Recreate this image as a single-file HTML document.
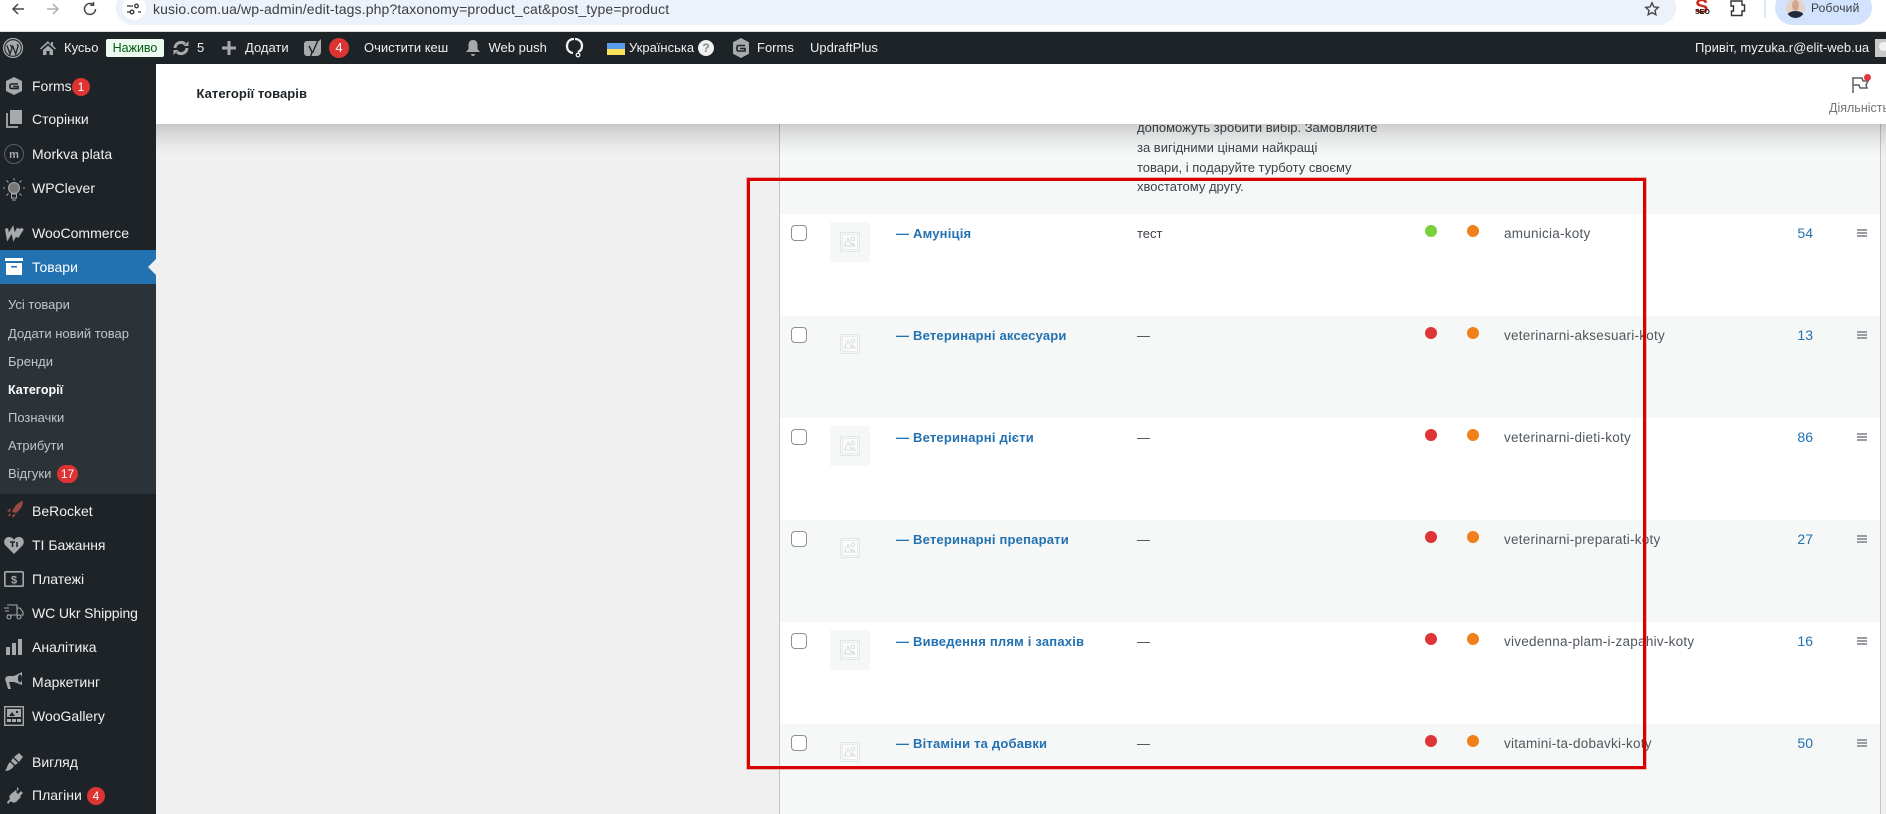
<!DOCTYPE html>
<html lang="uk"><head><meta charset="utf-8"><title>Категорії товарів</title>
<style>
*{box-sizing:border-box}
html,body{margin:0;padding:0;width:1886px;height:814px;overflow:hidden;background:#f0f0f1;font-family:"Liberation Sans",sans-serif;font-size:14px;color:#3c434a}
.a{position:absolute;white-space:nowrap}
svg{position:absolute;overflow:visible}
#chrome{position:absolute;left:0;top:0;width:1886px;height:32px;background:#fff;border-bottom:1px solid #dadce0;z-index:6;overflow:hidden}
#bar{position:absolute;left:0;top:32px;width:1886px;height:32px;background:#1d2327;z-index:6;overflow:hidden}
#bar .t{position:absolute;top:0;line-height:31px;font-size:13px;color:#f0f0f1;white-space:nowrap}
#side{position:absolute;left:0;top:64px;width:156px;height:750px;background:#1d2327;z-index:5;overflow:hidden}
.m{position:absolute;left:32px;line-height:20px;height:20px;font-size:14px;color:#f0f0f1;white-space:nowrap}
.s{position:absolute;left:8px;line-height:20px;height:20px;font-size:13px;color:#c3c4c7;white-space:nowrap}
.b{position:absolute;height:18px;border-radius:9px;background:#dd3333;color:#fff;font-size:12px;line-height:18px;text-align:center}
#hdr{position:absolute;left:156px;top:64px;width:1730px;height:60px;background:#fff;z-index:4;overflow:hidden}
#shad{position:absolute;left:156px;top:124px;width:1730px;height:32px;z-index:3;background:linear-gradient(to bottom,rgba(0,0,0,.17),rgba(0,0,0,.1) 30%,rgba(0,0,0,.03) 70%,rgba(0,0,0,0))}
#tbl{position:absolute;left:779px;top:124px;width:1102px;height:690px;background:#f6f7f7;border-left:1px solid #c3c4c7;border-right:1px solid #c3c4c7}
.r{position:absolute;left:780px;width:1100px;height:102px}
.w{background:#fff}.g{background:#f6f7f7}
.cb{position:absolute;left:11px;top:11px;width:16px;height:16px;border:1px solid #8c8f94;border-radius:4px;background:#fff}
.th{position:absolute;left:50px;top:8px;width:40px;height:40px;background:#f6f7f7}
.th svg{left:10px;top:10px}
.n{position:absolute;left:116px;top:10px;line-height:20px;font-weight:bold;font-size:13px;color:#2271b1;white-space:nowrap;letter-spacing:.2px}
.d{position:absolute;left:357px;top:10px;line-height:20px;font-size:13px;color:#3c434a;white-space:nowrap}
.o{position:absolute;top:11px;width:12px;height:12px;border-radius:50%}
.o1{left:645px}.o2{left:687px;background:#f0801a}
.sl{position:absolute;left:724px;top:10px;line-height:20px;font-size:13.500px;color:#50575e;white-space:nowrap;letter-spacing:.25px}
.c{position:absolute;right:67px;top:9px;line-height:20px;font-size:14px;color:#2271b1}
.h{position:absolute;left:1077px;top:15px;width:10px;height:8px;background:repeating-linear-gradient(to bottom,#9a9da1 0,#9a9da1 2px,transparent 2px,transparent 3px)}
.desc{position:absolute;left:1137px;font-size:13px;line-height:20px;color:#3c434a;white-space:nowrap}
#red{position:absolute;left:747px;top:178px;width:899px;height:591px;border:3px solid #d90000;box-shadow:0 0 0 .6px rgba(220,0,0,.45);z-index:2}
</style></head><body>

<svg width="0" height="0" style="left:0;top:0"><defs><symbol id="ph" viewBox="0 0 20 20"><rect x=".5" y=".5" width="19" height="19" fill="none" stroke="#e2e7e4"/><rect x="2.500" y="2.500" width="15" height="15" fill="#fafbfa" stroke="#e9ecea"/><path d="M4.500 14L8 6.500l3.500 6.500 1.500-1.500 2 2.500z" fill="none" stroke="#d9dfdb" stroke-width="1.100"/><circle cx="13" cy="7" r="1.700" fill="none" stroke="#d9dfdb"/></symbol></defs></svg>

<div id="chrome">
<svg style="left:10px;top:1px" width="16" height="16" viewBox="0 0 16 16" fill="none" stroke="#474747" stroke-width="1.5"><path d="M14 8H3M8 3L3 8l5 5"/></svg>
<svg style="left:45px;top:1px" width="16" height="16" viewBox="0 0 16 16" fill="none" stroke="#b0b0b0" stroke-width="1.5"><path d="M2 8h11M8 3l5 5-5 5"/></svg>
<svg style="left:82px;top:1px" width="16" height="16" viewBox="0 0 16 16" fill="none" stroke="#474747" stroke-width="1.5"><path d="M13.5 8A5.5 5.5 0 1 1 11.5 3.7"/><path d="M11.5 1v3.2h-3.2"/></svg>
<div class="a" style="left:116px;top:-10px;width:1560px;height:35px;background:#edf2fa;border-radius:18px"></div>
<div class="a" style="left:122px;top:-4px;width:24px;height:24px;background:#fff;border-radius:50%"></div>
<svg style="left:127px;top:3px" width="14" height="12" viewBox="0 0 14 12" fill="none" stroke="#333" stroke-width="1.3"><path d="M0 3h6M11 9h3M0 9h3"/><circle cx="9.5" cy="3" r="1.8"/><circle cx="5" cy="9" r="1.8"/></svg>
<div class="a" style="left:153px;top:0;line-height:18px;font-size:14px;color:#3c4043;letter-spacing:.13px">kusio.com.ua/wp-admin/edit-tags.php?taxonomy=product_cat&amp;post_type=product</div>
<svg style="left:1644px;top:1px" width="16" height="16" viewBox="0 0 16 16" fill="none" stroke="#474747" stroke-width="1.4"><path d="M8 1.8l1.9 4.1 4.4.5-3.3 3 .9 4.4L8 11.6l-3.9 2.2.9-4.4-3.3-3 4.4-.5z"/></svg>
<div class="a" style="left:1695px;top:-3px;line-height:20px;font-size:20px;font-weight:bold;color:#cc2a1a">S</div>
<div class="a" style="left:1695px;top:10px;line-height:6px;font-size:7px;font-weight:bold;color:#111">SEO</div>
<svg style="left:1730px;top:0" width="16" height="17" viewBox="0 0 16 17" fill="none" stroke="#333" stroke-width="1.4"><path d="M1 1h11v4h2.5v6H12v4.5H1.500V11h2V6h-2.500z"/></svg>
<div class="a" style="left:1764px;top:0;width:2px;height:18px;background:#dfe8f6"></div>
<div class="a" style="left:1775px;top:-10px;width:97px;height:35px;background:#d3e3fd;border-radius:18px"></div>
<div class="a" style="left:1786px;top:-1px;width:19px;height:19px;border-radius:50%;background:#e6d3c5;overflow:hidden"><div class="a" style="left:1px;top:12px;width:17px;height:10px;border-radius:50%;background:#1f2a3c"></div><div class="a" style="left:6px;top:1px;width:7px;height:11px;border-radius:50%;background:#cfa78d"></div></div>
<div class="a" style="left:1811px;top:0;line-height:17px;font-size:12px;color:#3c4043;letter-spacing:.2px">Робочий</div>
</div>

<div id="bar">
<svg style="left:3px;top:6px" width="20" height="20" viewBox="0 0 20 20"><circle cx="10" cy="10" r="9.500" fill="none" stroke="#a7aaad" stroke-width="1.300"/><circle cx="10" cy="10" r="7.800" fill="#a7aaad"/><path d="M4 7.500l3 8.500 2-6-1-2.500H7M9.500 7.500l3.200 8.500 2.300-7.500c.3-1-.5-2-1.200-2" fill="none" stroke="#1d2327" stroke-width="1.300"/></svg>
<svg style="left:40px;top:8px" width="16" height="16" viewBox="0 0 16 16"><path d="M8 1L0 8.500l1 1L8 3.300l7 6.200 1-1-3-2.700V2h-2v3zM3 10l5-4.500 5 4.500v5H9.500v-4h-3v4H3z" fill="#a7aaad"/></svg>
<div class="t" style="left:64px">Кусьо</div>
<div class="a" style="left:106px;top:7px;width:58px;height:18px;background:#edfaef;border-radius:2px;text-align:center;line-height:18px;font-size:12.500px;color:#005c12">Наживо</div>
<svg style="left:172px;top:7px" width="18" height="18" viewBox="0 0 18 18" fill="none" stroke="#a7aaad" stroke-width="3"><path d="M3 9a6 6 0 0 1 10-4M15 9a6 6 0 0 1-10 4"/><path d="M16.500 2v5h-5zM1.500 16v-5h5z" fill="#a7aaad" stroke="none"/></svg>
<div class="t" style="left:197px">5</div>
<svg style="left:222px;top:9px" width="14" height="14" viewBox="0 0 14 14"><path d="M5.500 0h3v5.500H14v3H8.500V14h-3V8.500H0v-3h5.500z" fill="#a7aaad"/></svg>
<div class="t" style="left:245px">Додати</div>
<svg style="left:304px;top:6px" width="18" height="20" viewBox="0 0 18 20"><path d="M3 3h12l2-2v13c0 2-2 4-4 4H3c-1.500 0-3-1.500-3-3V6c0-1.500 1.500-3 3-3z" fill="#a7aaad"/><path d="M5 8l3 6-1.500 5M14 2L8.500 15" fill="none" stroke="#1d2327" stroke-width="1.400"/></svg>
<div class="b" style="left:329px;top:6px;width:20px;height:20px;border-radius:10px;line-height:20px;font-size:13px">4</div>
<div class="t" style="left:364px">Очистити кеш</div>
<svg style="left:466px;top:7px" width="14" height="18" viewBox="0 0 14 18"><path d="M7 1c3 0 4.500 2 4.500 5v4l2.500 3H0l2.500-3V6C2.500 3 4 1 7 1zM5 15h4c0 1.200-1 2-2 2s-2-.8-2-2z" fill="#a7aaad"/></svg>
<div class="t" style="left:488.500px">Web push</div>
<svg style="left:565px;top:5px" width="19" height="22" viewBox="0 0 19 22" fill="none" stroke="#f0f0f1" stroke-width="2.300"><path d="M9 2C4 2 2 5.500 2 9s2 6.500 6 7M10 2c4 0 7 3 7 7 0 3-1.500 5-4 6"/><circle cx="13" cy="18" r="1.800" stroke-width="1.300"/></svg>
<div class="a" style="left:607px;top:11px;width:18px;height:6px;background:#5b9bef"></div>
<div class="a" style="left:607px;top:17px;width:18px;height:6px;background:#fbe05c"></div>
<div class="t" style="left:629px">Українська</div>
<div class="a" style="left:698px;top:8px;width:16px;height:16px;border-radius:50%;background:#f0f0f1;color:#8a8d90;font-size:12px;line-height:16px;text-align:center;font-weight:bold">?</div>
<svg style="left:733px;top:6px" width="16" height="20" viewBox="0 0 16 20"><path d="M8 0l8 4.200v11.600L8 20 0 15.800V4.200z" fill="#a7aaad"/><path d="M12 7.500H5.500c-1 0-1.500.5-1.500 1.500v2.500c0 1 .5 1.500 1.500 1.500H12v-2.500H7" fill="none" stroke="#1d2327" stroke-width="1.600"/></svg>
<div class="t" style="left:757px">Forms</div>
<div class="t" style="left:810px">UpdraftPlus</div>
<div class="t" style="left:1695px">Привіт, myzuka.r@elit-web.ua</div>
<div class="a" style="left:1875px;top:7px;width:11px;height:18px;background:#c9c9c9;overflow:hidden"><div class="a" style="left:4px;top:3px;width:9px;height:9px;border-radius:50%;background:#f1f1f1"></div></div>
</div>

<div id="hdr">
<div class="a" style="left:40.500px;top:20px;line-height:20px;font-size:13px;font-weight:bold;color:#1d2327;letter-spacing:.05px">Категорії товарів</div>
<svg style="left:1695px;top:12px" width="20" height="18" viewBox="0 0 20 18" fill="none" stroke="#5c6066" stroke-width="1.500"><path d="M2 1v16M2 2h9l1 3h5l-2 4 1 3H9l-1-3H2"/></svg>
<div class="a" style="left:1708px;top:10px;width:7px;height:7px;border-radius:50%;background:#e0383e"></div>
<div class="a" style="left:1673px;top:34px;line-height:20px;font-size:12.500px;color:#757575">Діяльність</div>
</div>
<div id="shad"></div>

<div id="side">
<svg style="left:6px;top:13px" width="16" height="18" viewBox="0 0 16 18"><path d="M8 0l8 4v10l-8 4-8-4V4z" fill="#a7aaad"/><path d="M12 7H5.500c-1 0-1.500.5-1.500 1.500v1.500c0 1 .5 1.500 1.500 1.500H12V9.500H7" fill="none" stroke="#1d2327" stroke-width="1.600"/></svg>
<div class="m" style="top:12px">Forms</div><div class="b" style="left:72px;top:14px;width:18px">1</div>
<svg style="left:6px;top:46px" width="16" height="18" viewBox="0 0 16 18"><path d="M4 0h12v14H4z" fill="#a7aaad"/><path d="M1 3v14h11" fill="none" stroke="#a7aaad" stroke-width="1.800"/></svg>
<div class="m" style="top:45px">Сторінки</div>
<svg style="left:4px;top:80px" width="20" height="20" viewBox="0 0 20 20"><circle cx="10" cy="10" r="9.500" fill="none" stroke="#5c6167"/><text x="10" y="14" font-family="Liberation Sans" font-size="11" font-weight="bold" fill="#a7aaad" text-anchor="middle">m</text></svg>
<div class="m" style="top:80px">Morkva plata</div>
<svg style="left:3px;top:113px" width="22" height="26" viewBox="0 0 22 26" fill="none" stroke="#a7aaad" stroke-width="1"><circle cx="11" cy="11" r="5.500" fill="#777"/><path d="M8.500 17h5v4h-5zM9 23h4M11 1v2.500M2 11H0M22 11h-2M3.500 3.500l2 2M18.500 3.500l-2 2M3.500 18.500l2-2M18.500 18.500l-2-2"/></svg>
<div class="m" style="top:114px">WPClever</div>
<svg style="left:4px;top:163px" width="20" height="12" viewBox="0 0 20 12" fill="none" stroke="#a7aaad" stroke-width="3.200"><path d="M2.500 1.500L4 10l4.500-7.500L10 10l4.500-8.500"/><path d="M14.500 1.500L13 10l5.500-8.500"/></svg>
<div class="m" style="top:159px">WooCommerce</div>
<div class="a" style="left:0;top:186px;width:156px;height:34px;background:#2271b1"></div>
<svg style="left:5px;top:194px" width="18" height="17" viewBox="0 0 18 17"><path d="M0 0h18v3H0zM1 5h16v12H1z" fill="#fff"/><path d="M6 8h6v1.500H6z" fill="#2271b1"/></svg>
<div class="m" style="top:193px;color:#fff">Товари</div>
<div class="a" style="left:148px;top:195px;width:0;height:0;border-top:8px solid transparent;border-bottom:8px solid transparent;border-right:8px solid #f0f0f1"></div>
<div class="a" style="left:0;top:220px;width:156px;height:210px;background:#2c3338"></div>
<div class="s" style="top:231px">Усі товари</div>
<div class="s" style="top:260px">Додати новий товар</div>
<div class="s" style="top:288px">Бренди</div>
<div class="s" style="top:316px;color:#fff;font-weight:bold;font-size:12.500px">Категорії</div>
<div class="s" style="top:344px">Позначки</div>
<div class="s" style="top:372px">Атрибути</div>
<div class="s" style="top:400px">Відгуки</div><div class="b" style="left:57px;top:401px;width:21px;height:18px">17</div>
<svg style="left:6px;top:437px" width="17" height="17" viewBox="0 0 17 17"><path d="M17 0c0 5-3 9-7 12l-4-1C8 6 12 1 17 0zM5 7L1 10l3 1zM10 13l-3 4-1-3zM4 12l-3 4 4-2z" fill="#9a4a40"/></svg>
<div class="m" style="top:437px">BeRocket</div>
<svg style="left:4px;top:472px" width="20" height="18" viewBox="0 0 20 18"><path d="M10 18L1 9C-1 5 1 1 5 1c2 0 4 1 5 3 1-2 3-3 5-3 4 0 6 4 4 8z" fill="#a7aaad"/><path d="M6 6h5M8.500 6v5M13 6v5" stroke="#1d2327" stroke-width="1.500"/></svg>
<div class="m" style="top:471px">ТІ Бажання</div>
<svg style="left:4px;top:507px" width="20" height="16" viewBox="0 0 20 16"><rect x=".8" y=".8" width="18.400" height="14.400" rx="1" fill="none" stroke="#a7aaad" stroke-width="1.600"/><text x="10" y="12.500" font-family="Liberation Sans" font-size="11" font-weight="bold" fill="#a7aaad" text-anchor="middle">$</text></svg>
<div class="m" style="top:505px">Платежі</div>
<svg style="left:4px;top:540px" width="20" height="16" viewBox="0 0 20 16" fill="none" stroke="#a7aaad" stroke-width="1.100"><path d="M3 1h10v10H3M13 4h3l3 4v3h-2M0 4h5M1 7h4"/><circle cx="5" cy="13" r="2"/><circle cx="15" cy="13" r="2"/></svg>
<div class="m" style="top:539px;letter-spacing:-.1px">WC Ukr Shipping</div>
<svg style="left:6px;top:575px" width="16" height="16" viewBox="0 0 16 16"><path d="M0 8h4v8H0zM6 4h4v12H6zM12 0h4v16h-4z" fill="#a7aaad"/></svg>
<div class="m" style="top:573px">Аналітика</div>
<svg style="left:5px;top:608px" width="18" height="18" viewBox="0 0 18 18"><path d="M17 0v13L9 10H4l2 7H3L1 10C0 8 0 6 1 5c.5-.5 2-1 3-1h5z" fill="#a7aaad"/><ellipse cx="15" cy="6.500" rx="2" ry="4" fill="#1d2327"/></svg>
<div class="m" style="top:608px">Маркетинг</div>
<svg style="left:4px;top:642px" width="20" height="20" viewBox="0 0 20 20"><rect x=".7" y=".7" width="18.600" height="18.600" fill="none" stroke="#a7aaad" stroke-width="1.400"/><path d="M3 3h14v8H3z" fill="#a7aaad"/><path d="M5 10l3-4 3 4z" fill="#1d2327"/><circle cx="13" cy="6" r="1.200" fill="#1d2327"/><path d="M3 13h4v3H3zM8 13h4v3H8zM13 13h4v3h-4z" fill="#a7aaad"/></svg>
<div class="m" style="top:642px">WooGallery</div>
<svg style="left:5px;top:689px" width="18" height="18" viewBox="0 0 18 18"><path d="M9 4l5-4 4 4-4 5zM8 5l5 5-3 2-4-4zM5 9l4 4c-2 3-5 5-9 5 2-2 2-6 5-9z" fill="#a7aaad"/></svg>
<div class="m" style="top:688px">Вигляд</div>
<svg style="left:6px;top:723px" width="17" height="17" viewBox="0 0 17 17"><path d="M11 0l2 2-3 3 2 2 3-3 2 2-3 3 1 1-5 5c-2 1-4 1-5-1l-3 3-1-2 3-3c-1-2-1-3 1-5l5-4 1 1z" fill="#a7aaad"/></svg>
<div class="m" style="top:721px">Плагіни</div><div class="b" style="left:87px;top:723px;width:18px">4</div>
</div>

<div id="tbl"></div>
<div class="desc" style="top:118px;z-index:1">допоможуть зробити вибір. Замовляйте</div>
<div class="desc" style="top:138px;z-index:1">за вигідними цінами найкращі</div>
<div class="desc" style="top:158px;z-index:1">товари, і подаруйте турботу своєму</div>
<div class="desc" style="top:177px;z-index:1">хвостатому другу.</div>

<div class="r w" style="top:214px"><div class="cb"></div><div class="th"><svg width="20" height="20"><use href="#ph"/></svg></div><div class="n">— Амуніція</div><div class="d">тест</div><div class="o o1" style="background:#7ad03a"></div><div class="o o2"></div><div class="sl">amunicia-koty</div><div class="c">54</div><div class="h"></div></div>
<div class="r g" style="top:316px"><div class="cb"></div><div class="th"><svg width="20" height="20"><use href="#ph"/></svg></div><div class="n">— Ветеринарні аксесуари</div><div class="d">—</div><div class="o o1" style="background:#e03535"></div><div class="o o2"></div><div class="sl">veterinarni-aksesuari-koty</div><div class="c">13</div><div class="h"></div></div>
<div class="r w" style="top:418px"><div class="cb"></div><div class="th"><svg width="20" height="20"><use href="#ph"/></svg></div><div class="n">— Ветеринарні дієти</div><div class="d">—</div><div class="o o1" style="background:#e03535"></div><div class="o o2"></div><div class="sl">veterinarni-dieti-koty</div><div class="c">86</div><div class="h"></div></div>
<div class="r g" style="top:520px"><div class="cb"></div><div class="th"><svg width="20" height="20"><use href="#ph"/></svg></div><div class="n">— Ветеринарні препарати</div><div class="d">—</div><div class="o o1" style="background:#e03535"></div><div class="o o2"></div><div class="sl">veterinarni-preparati-koty</div><div class="c">27</div><div class="h"></div></div>
<div class="r w" style="top:622px"><div class="cb"></div><div class="th"><svg width="20" height="20"><use href="#ph"/></svg></div><div class="n">— Виведення плям і запахів</div><div class="d">—</div><div class="o o1" style="background:#e03535"></div><div class="o o2"></div><div class="sl">vivedenna-plam-i-zapahiv-koty</div><div class="c">16</div><div class="h"></div></div>
<div class="r g" style="top:724px;height:90px"><div class="cb"></div><div class="th"><svg width="20" height="20"><use href="#ph"/></svg></div><div class="n">— Вітаміни та добавки</div><div class="d">—</div><div class="o o1" style="background:#e03535"></div><div class="o o2"></div><div class="sl">vitamini-ta-dobavki-koty</div><div class="c">50</div><div class="h"></div></div>

<div id="red"></div>
</body></html>
